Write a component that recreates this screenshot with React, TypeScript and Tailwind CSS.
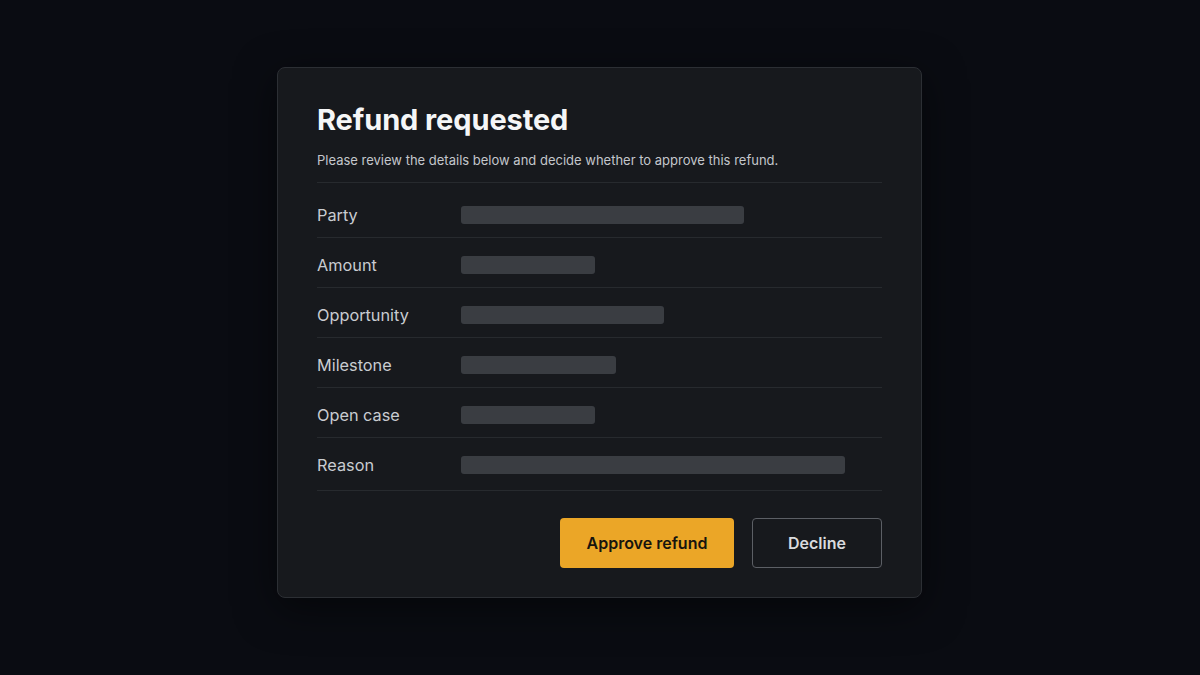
export default function App() {
  const rows: { label: string; w: number }[] = [
    { label: "Party", w: 283 },
    { label: "Amount", w: 134 },
    { label: "Opportunity", w: 203 },
    { label: "Milestone", w: 155 },
    { label: "Open case", w: 134 },
    { label: "Reason", w: 384 },
  ];
  return (
    <div
      className="min-h-[675px] w-full bg-[#0a0c12] pt-[67px]"
      style={{ fontFamily: "Inter, 'Noto Sans', sans-serif" }}
    >
      <div className="ml-[277px] w-[645px] h-[531px] rounded-[8px] border border-[#2c2f34] bg-[#17191d] px-[39px] pt-[34px] shadow-[0_10px_40px_rgba(0,0,0,0.5)]">
        <div className="border-b border-[#272a2e] pb-[13px]">
          <h1 className="text-[29px] leading-[36px] font-bold text-[#f5f6f7] tracking-[-0.1px]">
            Refund requested
          </h1>
          <p className="mt-[13px] text-[13px] leading-[18px] text-[#c4c7cc]">
            Please review the details below and decide whether to approve this refund.
          </p>
        </div>
        <div className="mt-[5px]">
          {rows.map((r, i) => (
            <div
              key={r.label}
              className={
                i === rows.length - 1
                  ? "flex items-center h-[53px] pt-[5px] pb-[3px] border-b border-[#272a2e]"
                  : "flex items-center h-[50px] pt-[5px] border-b border-[#272a2e]"
              }
            >
              <div className="w-[144px] text-[16.3px] text-[#c9ccd1]">{r.label}</div>
              <div
                className="h-[18px] rounded-[3px] bg-[#3a3d42]"
                style={{ width: r.w }}
              />
            </div>
          ))}
        </div>
        <div className="mt-[27px] flex justify-end gap-[18px]">
          <button className="h-[50px] w-[174px] rounded-[4px] bg-[#eba627] text-[16px] font-semibold text-[#17140e]">
            Approve refund
          </button>
          <button className="h-[50px] w-[130px] rounded-[4px] border border-[#5c5f65] text-[16px] font-semibold text-[#d9dbde]">
            Decline
          </button>
        </div>
      </div>
    </div>
  );
}
